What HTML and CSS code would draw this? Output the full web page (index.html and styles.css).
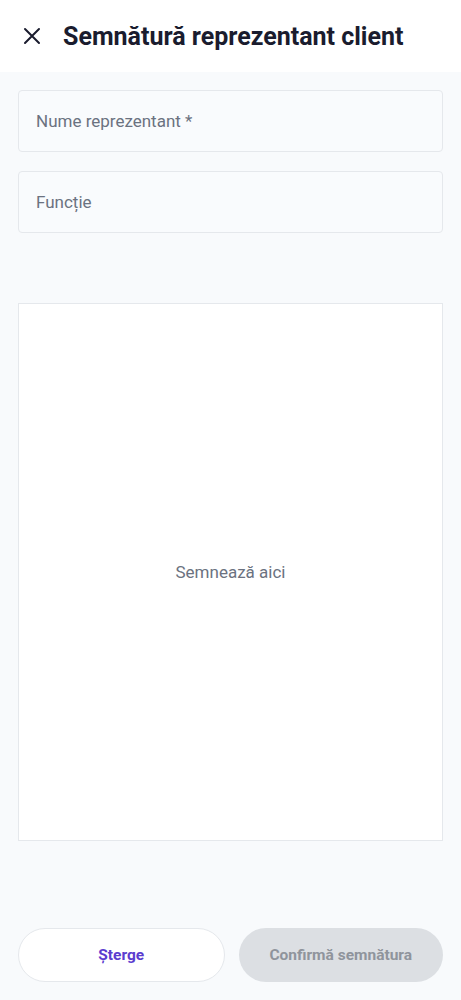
FILE: index.html
```html
<!DOCTYPE html>
<html lang="ro">
<head>
<meta charset="utf-8">
<link rel="stylesheet" href="styles.css">
</head>
<body>
<div class="screen">
  <header class="topbar">
    <button class="close" aria-label="Închide">
      <svg width="18" height="18" viewBox="0 0 18 18"><path d="M2 2L16 16M16 2L2 16" stroke="#1a1c2e" stroke-width="2" stroke-linecap="round" fill="none"/></svg>
    </button>
    <h1 class="title">Semnătură reprezentant client</h1>
  </header>
  <main class="content">
    <div class="field">Nume reprezentant *</div>
    <div class="field">Funcție</div>
    <div class="pad"><span class="pad-hint">Semnează aici</span></div>
  </main>
  <footer class="actions">
    <button class="btn btn-outline">Șterge</button>
    <button class="btn btn-disabled">Confirmă semnătura</button>
  </footer>
</div>
</body>
</html>
```
FILE: styles.css
```css
* { box-sizing: border-box; }
html, body { margin: 0; padding: 0; }
body {
  font-family: Roboto, "Noto Sans", Arial, sans-serif;
  background: #f8fafc;
  width: 461px;
  height: 1000px;
  overflow: hidden;
}
.screen {
  display: flex;
  flex-direction: column;
  height: 1000px;
}
.topbar {
  height: 72px;
  background: #ffffff;
  display: flex;
  align-items: center;
  padding-left: 23px;
  gap: 22px;
}
.close {
  border: 0;
  background: none;
  padding: 0;
  width: 18px;
  height: 18px;
  display: flex;
}
.title {
  margin: 0;
  font-size: 25px;
  font-weight: 700;
  color: #1a1c2e;
  letter-spacing: 0;
}
.content {
  padding: 18px 18px 0 18px;
  display: flex;
  flex-direction: column;
}
.field {
  height: 62px;
  background: #f9fbfd;
  border: 1px solid #e5e8ec;
  border-radius: 4px;
  display: flex;
  align-items: center;
  padding-left: 17px;
  font-size: 17px;
  color: #6b7280;
  margin-bottom: 19px;
}
.pad {
  margin-top: 51px;
  height: 538px;
  background: #ffffff;
  border: 1px solid #e5e8ec;
  display: flex;
  align-items: center;
  justify-content: center;
}
.pad-hint {
  font-size: 17px;
  color: #6b7280;
}
.actions {
  margin-top: auto;
  padding: 0 18px 18px 18px;
  display: flex;
  gap: 14px;
}
.btn {
  flex: 1;
  height: 54px;
  border-radius: 27px;
  font-family: inherit;
  font-size: 15.5px;
  font-weight: 700;
}
.btn-outline {
  background: #ffffff;
  border: 1px solid #e5e8ec;
  color: #5b3ccf;
}
.btn-disabled {
  background: #dcdfe3;
  border: 0;
  color: #8f949c;
}
```
